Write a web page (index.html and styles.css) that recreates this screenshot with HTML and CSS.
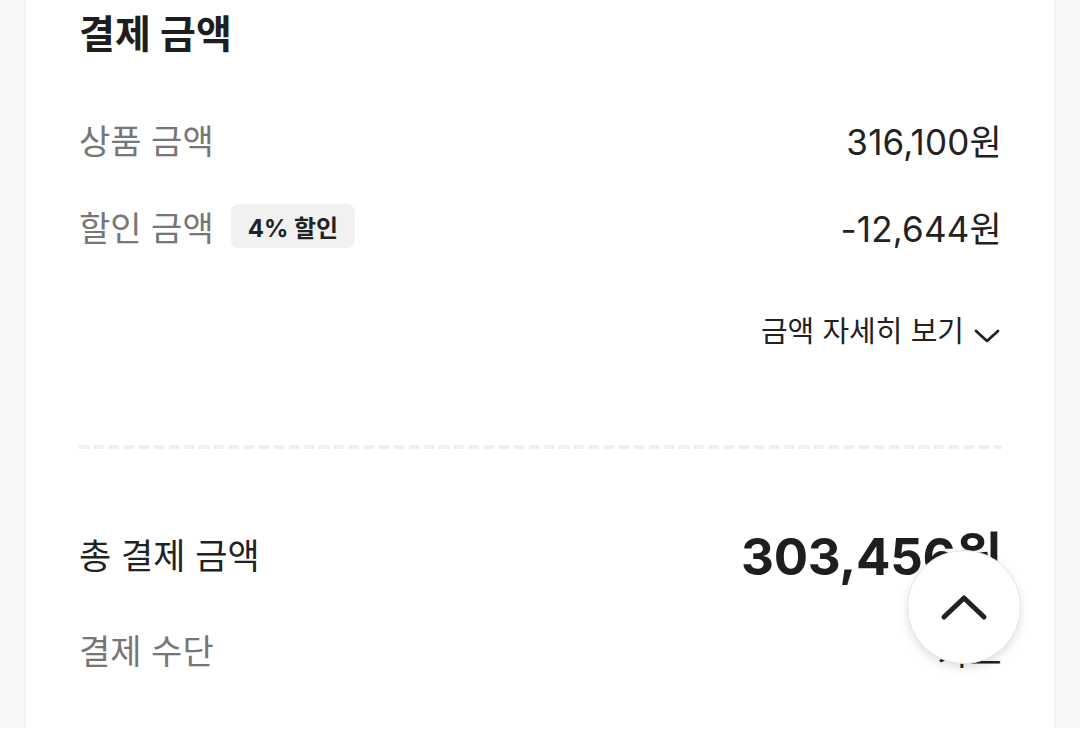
FILE: index.html
```html
<!DOCTYPE html>
<html lang="ko">
<head>
<meta charset="utf-8">
<title>결제 금액</title>
<link rel="stylesheet" href="styles.css">
</head>
<body>
<div class="page">
  <section class="card">
    <h2 class="title">결제 금액</h2>
    <div class="row row-first">
      <span class="label">상품 금액</span>
      <span class="value">316,100원</span>
    </div>
    <div class="row row-second">
      <span class="label-wrap"><span class="label">할인 금액</span><span class="badge">4% 할인</span></span>
      <span class="value">-12,644원</span>
    </div>
    <div class="detail">
      <span>금액 자세히 보기</span>
      <svg class="chev-down" width="26" height="14" viewBox="0 0 26 14"><path d="M2 2 L13 12 L24 2" fill="none" stroke="#222" stroke-width="2.8" stroke-linecap="round" stroke-linejoin="round"/></svg>
    </div>
    <div class="dashed"></div>
    <div class="row total-row">
      <span class="total-label">총 결제 금액</span>
      <span class="total-value">303,456원</span>
    </div>
    <div class="row method-row">
      <span class="label">결제 수단</span>
      <span class="value">카드</span>
    </div>
  </section>
</div>
<div class="bottom"></div>
<button class="top-btn" aria-label="맨 위로">
  <svg width="48" height="30" viewBox="0 0 48 30"><path d="M4 25 L24 6 L44 25" fill="none" stroke="#222" stroke-width="5" stroke-linecap="round" stroke-linejoin="round"/></svg>
</button>
</body>
</html>
```
FILE: styles.css
```css
html, body {
  margin: 0;
  padding: 0;
}
body {
  background: #ffffff;
  font-family: Inter, "Noto Sans CJK KR", sans-serif;
  color: #222222;
  height: 749px;
  overflow: hidden;
}
.page {
  background: #f7f7f7;
  padding: 0 26px;
}
.card {
  background: #ffffff;
  height: 728px;
  box-sizing: border-box;
  padding: 10px 52px 0 53px;
  box-shadow: 0 0 3px rgba(0, 0, 0, 0.06);
  display: flex;
  flex-direction: column;
}
.title {
  margin: 0;
  font-size: 39px;
  line-height: 48px;
  font-weight: 700;
  color: #1e1e1e;
}
.row {
  display: flex;
  justify-content: space-between;
  align-items: center;
  height: 48px;
}
.row-first { margin-top: 57px; }
.row-second { margin-top: 39px; }
.label {
  font-size: 34px;
  color: #767676;
}
.value {
  font-size: 35px;
  color: #222222;
  letter-spacing: 0.2px;
}
.label-wrap {
  display: flex;
  align-items: center;
  gap: 17px;
}
.badge {
  background: #f1f1f1;
  border-radius: 8px;
  height: 44px;
  padding: 0 17px;
  display: inline-flex;
  align-items: center;
  font-size: 24px;
  font-weight: 700;
  color: #222222;
}
.detail {
  margin-top: 63px;
  align-self: flex-end;
  display: flex;
  align-items: center;
  gap: 10px;
  font-size: 29px;
  line-height: 38px;
  color: #222222;
  margin-right: 2px;
}
.chev-down {
  margin-top: 8px;
}
.dashed {
  margin-top: 94px;
  height: 4px;
  background-image: linear-gradient(to right, #efefef 0 10px, transparent 10px 15px);
  background-size: 15px 4px;
  background-repeat: repeat-x;
}
.total-row {
  margin-top: 74px;
  height: 60px;
}
.total-label {
  font-size: 35px;
  color: #222222;
}
.total-value {
  font-size: 51px;
  font-weight: 700;
  color: #1e1e1e;
  letter-spacing: -0.3px;
}
.method-row {
  margin-top: 42px;
}
.bottom {
  height: 21px;
  background: #ffffff;
}
.top-btn {
  position: fixed;
  right: 59px;
  bottom: 85px;
  width: 114px;
  height: 114px;
  border-radius: 50%;
  background: #ffffff;
  border: 1px solid #e4e4e4;
  box-shadow: 0 4px 10px rgba(0, 0, 0, 0.12);
  display: flex;
  align-items: center;
  justify-content: center;
  padding: 0;
}
```
